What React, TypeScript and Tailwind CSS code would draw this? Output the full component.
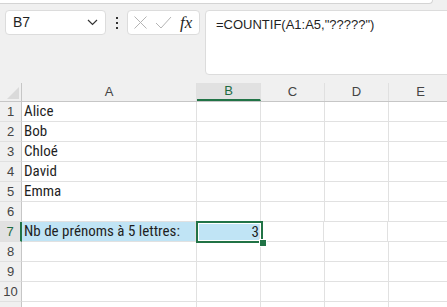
import React from "react";

const cols = [
  { name: "A", w: 175 },
  { name: "B", w: 64 },
  { name: "C", w: 64 },
  { name: "D", w: 64 },
  { name: "E", w: 64 },
];

const data: Record<number, string> = {
  1: "Alice",
  2: "Bob",
  3: "Chloé",
  4: "David",
  5: "Emma",
  7: "Nb de prénoms à 5 lettres:",
};

const rows = [1, 2, 3, 4, 5, 6, 7, 8, 9, 10, 11];

const cellFont = { fontFamily: '"Liberation Sans Narrow", "Roboto Condensed", Arial, sans-serif' };

export default function App() {
  return (
    <div
      className="relative w-[447px] h-[307px] overflow-hidden bg-[#f0f0f0] text-[#1f1f1f]"
      style={{ fontFamily: '"Liberation Sans", Arial, sans-serif' }}
    >
      {/* ribbon edge */}
      <div className="h-[4px] w-[441px] -ml-[8px] bg-white border-b border-r border-[#d4d4d4] rounded-br-[6px]" />

      {/* formula bar */}
      <div className="flex items-start pt-[6px] pl-[5px]">
        <div className="flex items-center justify-between shrink-0 w-[101px] h-[25px] bg-white border border-[#dcdcdc] rounded-[4px] pl-[7px] pr-[7px]">
          <span className="text-[14px]">B7</span>
          <svg width="11" height="7" viewBox="0 0 11 7">
            <path d="M1 1l4.5 4.5L10 1" fill="none" stroke="#333" strokeWidth="1.2" />
          </svg>
        </div>
        <div className="flex flex-col shrink-0 justify-center items-center gap-[3px] w-[21px] h-[25px]">
          <span className="w-[2px] h-[2px] bg-[#333]" />
          <span className="w-[2px] h-[2px] bg-[#333]" />
          <span className="w-[2px] h-[2px] bg-[#333]" />
        </div>
        <div className="flex items-center shrink-0 w-[73px] h-[25px] bg-white border border-[#dcdcdc] rounded-[4px] pl-[5px]">
          <svg width="15" height="15" viewBox="0 0 15 15">
            <path d="M1.5 1.5l12 12M13.5 1.5l-12 12" stroke="#b4b4b4" strokeWidth="1" fill="none" />
          </svg>
          <svg width="17" height="15" viewBox="0 0 17 15" className="ml-[7px]">
            <path d="M1 8l5 5L16 2" stroke="#b4b4b4" strokeWidth="1" fill="none" />
          </svg>
          <span
            className="ml-[8px] text-[17px] italic leading-none"
            style={{ fontFamily: '"Liberation Serif", "Times New Roman", serif' }}
          >
            fx
          </span>
        </div>
        <div className="ml-[5px] flex-1 h-[65px] bg-white border border-[#dcdcdc] rounded-l-[4px] -mr-[4px] pl-[10px] pt-[4px] text-[13px] whitespace-nowrap">
          =COUNTIF(A1:A5,"?????")
        </div>
      </div>

      {/* grid */}
      <div className="mt-[8px]">
        <div className="flex h-[19px] border-b border-[#c6c6c6]">
          <div className="relative shrink-0 w-[22px] border-r border-[#c6c6c6]">
            <div
              className="absolute right-[2px] bottom-[2px] w-[12px] h-[12px] bg-[#dadada]"
              style={{ clipPath: "polygon(100% 0, 100% 100%, 0 100%)" }}
            />
          </div>
          {cols.map((c) => (
            <div
              key={c.name}
              style={{ width: c.w }}
              className={
                c.name === "B"
                  ? "shrink-0 flex items-center justify-center text-[13px] bg-[#e1e1e1] text-[#1e6b41] border-b-2 border-[#217346] border-r border-r-[#e0e0e0]"
                  : "shrink-0 flex items-center justify-center text-[13px] text-[#444] border-r border-[#e0e0e0]"
              }
            >
              {c.name}
            </div>
          ))}
        </div>

        {rows.map((r) => (
          <div key={r} className="flex h-[20px]">
            <div
              className={
                r === 7
                  ? "w-[22px] shrink-0 flex items-center justify-center text-[13px] bg-[#e1e1e1] text-[#1e6b41] border-r-2 border-[#217346] border-b border-b-[#e0e0e0]"
                  : "w-[22px] shrink-0 flex items-center justify-center text-[13px] text-[#444] border-r border-[#c6c6c6] border-b border-b-[#e0e0e0]"
              }
            >
              {r < 11 ? r : ""}
            </div>
            {cols.map((c) => (
              <div
                key={c.name}
                style={{ width: c.name === "A" && r === 7 ? c.w - 1 : c.w, ...cellFont }}
                className={
                  r === 7 && (c.name === "A" || c.name === "B")
                    ? "shrink-0 flex items-center px-[2px] text-[15px] whitespace-nowrap bg-[#c0e4f5] border-r border-b border-[#e1e1e1]"
                    : "shrink-0 flex items-center px-[2px] text-[15px] whitespace-nowrap bg-white border-r border-b border-[#e1e1e1]"
                }
              >
                {c.name === "A" ? data[r] : ""}
              </div>
            ))}
          </div>
        ))}
      </div>

      {/* selected cell B7 */}
      <div className="absolute left-[196px] top-[221px] w-[67px] h-[22px] border-2 border-[#217346] flex items-center justify-end pr-[2px]">
        <div className="absolute inset-0 border border-white" />
        <span className="relative text-[15px]" style={cellFont}>3</span>
      </div>
      <div className="absolute left-[259px] top-[239px] w-[6px] h-[6px] bg-[#217346] border border-white box-content" />
    </div>
  );
}
